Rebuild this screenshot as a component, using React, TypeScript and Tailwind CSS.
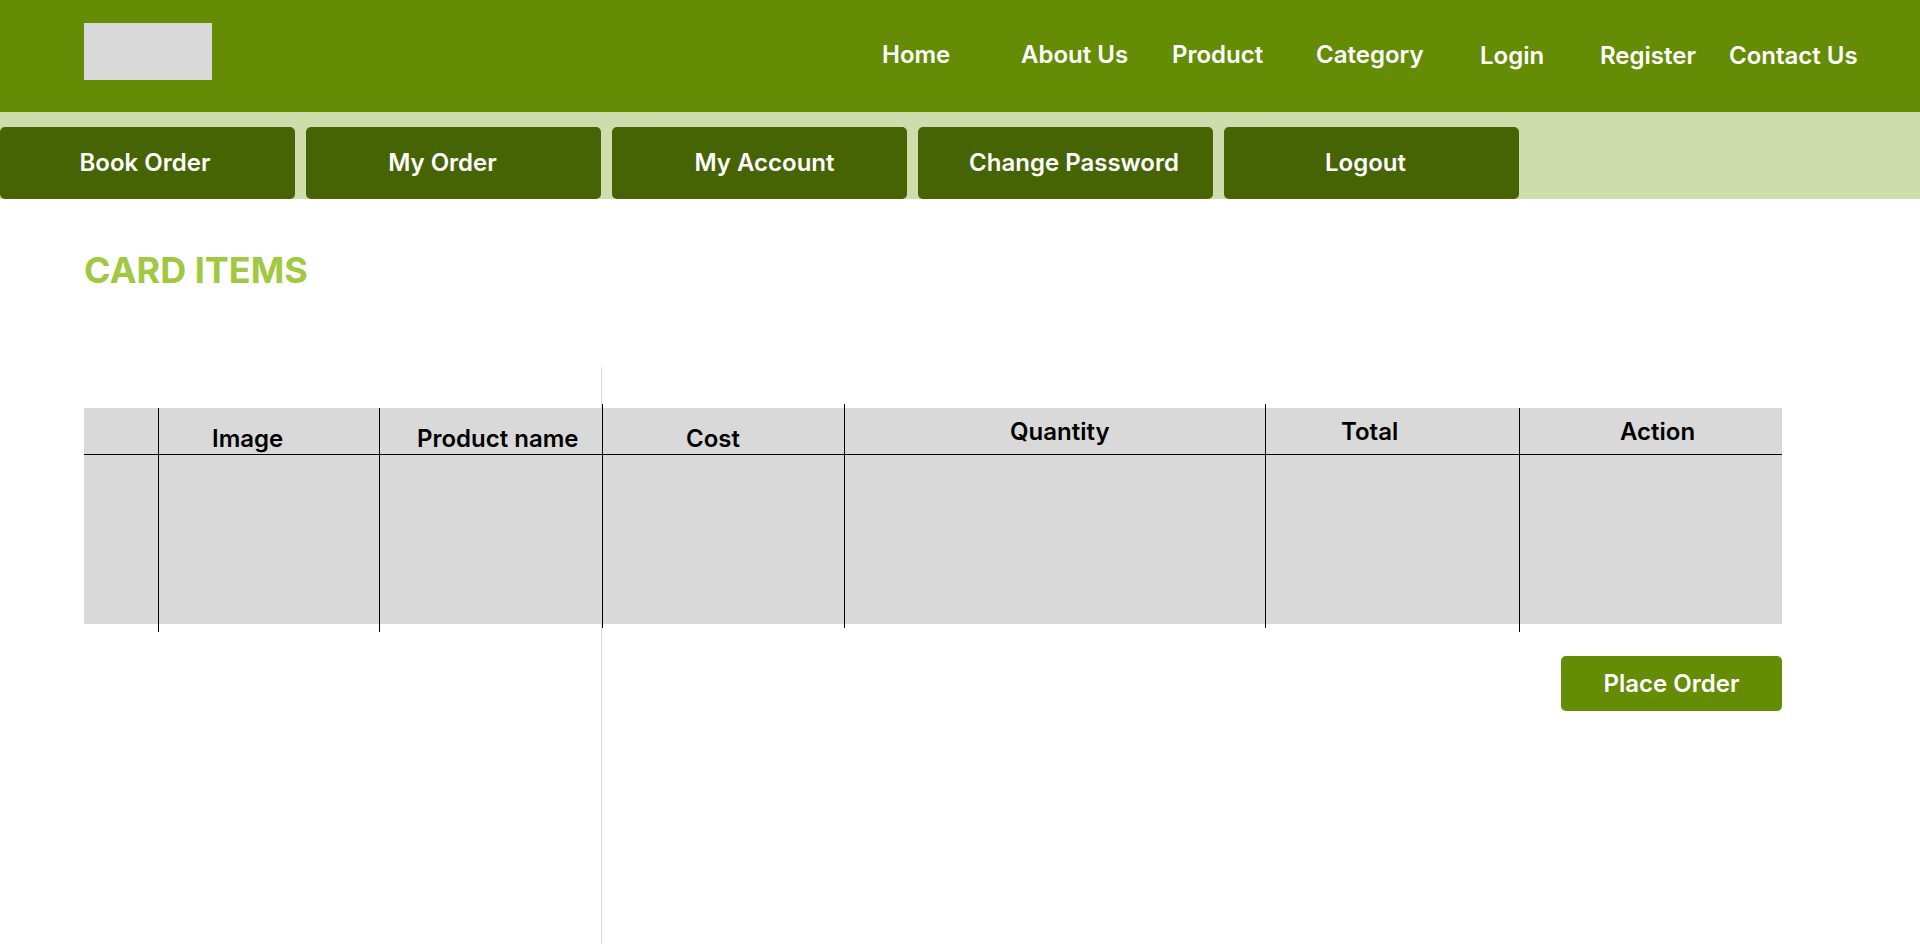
import React from 'react';

const navLinks = [
  { label: "Home", width: "w-[139px]", pad: "pt-[40px]" },
  { label: "About Us", width: "w-[151px]", pad: "pt-[40px]" },
  { label: "Product", width: "w-[144px]", pad: "pt-[40px]" },
  { label: "Category", width: "w-[164px]", pad: "pt-[40px]" },
  { label: "Login", width: "w-[120px]", pad: "pt-[41px]" },
  { label: "Register", width: "w-[129px]", pad: "pt-[41px]" },
  { label: "Contact Us", width: "w-[170px]", pad: "pt-[41px]" },
];

// small per-button nudges so the labels sit where the mockup has them
const accountLinks = [
  { label: "Book Order", pad: "pr-[5px]" },
  { label: "My Order", pad: "pr-[22px]" },
  { label: "My Account", pad: "pl-[10px]" },
  { label: "Change Password", pad: "pl-[17px]" },
  { label: "Logout", pad: "pr-[12px]" },
];

interface Column {
  label: string;
  width: string;
  pad: string;
}

const columns: Column[] = [
  { label: "", width: "w-[74px]", pad: "" },
  { label: "Image", width: "w-[220px]", pad: "pl-[53px] pt-[16px]" },
  { label: "Product name", width: "w-[222px]", pad: "pl-[37px] pt-[16px]" },
  { label: "Cost", width: "w-[241px]", pad: "pl-[83px] pt-[16px]" },
  { label: "Quantity", width: "w-[420px]", pad: "pl-[165px] pt-[9px]" },
  { label: "Total", width: "w-[253px]", pad: "pl-[75px] pt-[9px]" },
  { label: "Action", width: "w-[262px]", pad: "pl-[100px] pt-[9px]" },
];

// separator lines poke out of the grey box a little, like in the design
const separators = [
  "h-[224px] mt-0",
  "h-[224px] mt-0",
  "h-[224px] -mt-[4px]",
  "h-[224px] -mt-[4px]",
  "h-[224px] -mt-[4px]",
  "h-[224px] mt-0",
];

export default function App() {
  return (
    <div className="w-[1920px] h-[944px] overflow-hidden bg-white font-['Inter','Liberation_Sans',sans-serif]">
      {/* Top header */}
      <header className="flex h-[112px] bg-[#648C04]">
        <div className="ml-[84px] mt-[23px] h-[57px] w-[128px] bg-[#D9D9D9]" />
        <nav className="ml-[670px] flex">
          {navLinks.map((link) => (
            <a
              key={link.label}
              href="#"
              className={`${link.width} ${link.pad} text-[24px] leading-[29px] font-semibold text-white`}
            >
              {link.label}
            </a>
          ))}
        </nav>
      </header>

      {/* Account menu */}
      <div className="flex h-[87px] gap-[11px] bg-[#CFDCAC] pt-[15px]">
        {accountLinks.map((item) => (
          <button
            key={item.label}
            className={`flex h-[72px] w-[295px] items-center justify-center rounded-[5px] bg-[#466404] ${item.pad} text-[24px] font-semibold text-white`}
          >
            {item.label}
          </button>
        ))}
      </div>

      {/* Cart content */}
      <main className="relative h-[745px] pl-[84px]">
        <div className="absolute left-[601px] top-[168px] h-[600px] w-px bg-[#D9D9D9]" />

        <h1 className="pt-[49px] text-[36px] leading-[44px] font-bold text-[#A0C840]">CARD ITEMS</h1>

        <div className="relative mt-[116px] flex h-[216px] w-[1698px] items-start bg-[#D9D9D9]">
          {columns.map((col, i) => (
            <React.Fragment key={i}>
              <div className={`${col.width} flex h-[216px] flex-col`}>
                <div className={`h-[47px] border-b border-black ${col.pad} text-[24px] leading-[29px] font-semibold text-black`}>
                  {col.label}
                </div>
                <div className="flex-1" />
              </div>
              {i < separators.length && <div className={`w-px shrink-0 bg-black ${separators[i]}`} />}
            </React.Fragment>
          ))}
        </div>

        <div className="mt-[32px] flex w-[1698px] justify-end">
          <button className="h-[55px] w-[221px] rounded-[5px] bg-[#648C04] text-[24px] font-semibold text-white">
            Place Order
          </button>
        </div>
      </main>
    </div>
  );
}
